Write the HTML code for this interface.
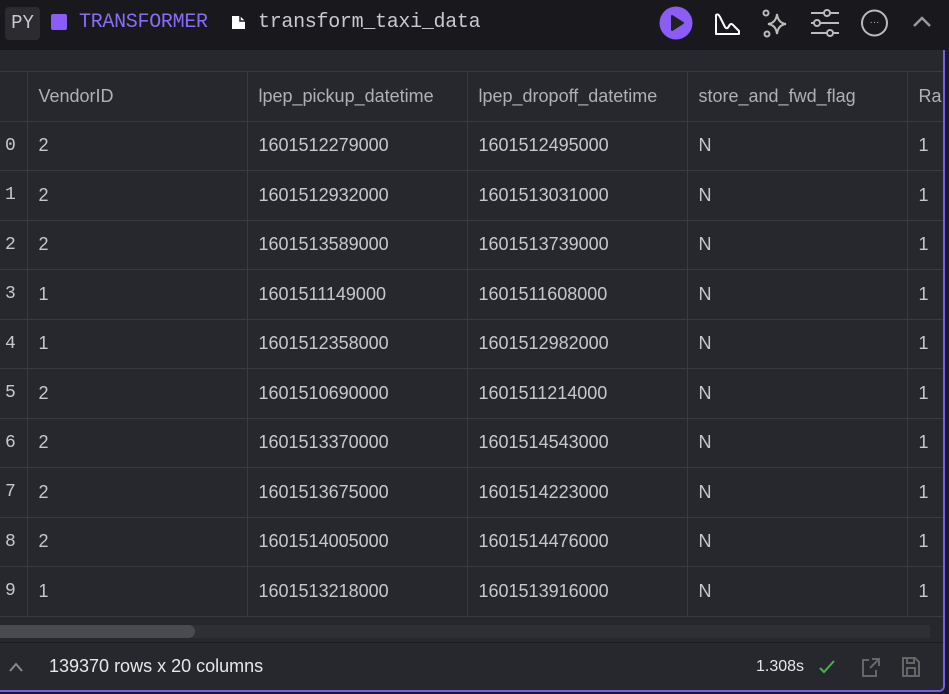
<!DOCTYPE html>
<html><head><style>
body{margin:0;width:949px;height:694px;background:#1b1b1f;overflow:hidden;font-family:"Liberation Sans",sans-serif;position:relative}
.hdr{position:absolute;left:0;top:0;width:949px;height:50px;background:#19191d}
.mono{font-family:"Liberation Mono",monospace}
.wrap{position:absolute;left:0;top:50px;width:943px;height:640px;background:#27282d;border-right:2px solid #7a5cf0;border-bottom:2px solid #7a5cf0;border-bottom-right-radius:6px;overflow:hidden}
table{position:absolute;top:21px;left:0;border-collapse:collapse;table-layout:fixed;width:947px;color:#c8c8cc;font-size:18px;border-bottom:1px solid #3a3b40}
td{height:49.5px;border-top:1px solid #3a3b40;border-left:1px solid #3a3b40;padding:0 0 0 11px;box-sizing:border-box;white-space:nowrap;overflow:hidden}
td.i{padding:0 0 0 5px;border-left:none;font-family:"Liberation Mono",monospace}
tr.h td{color:#b0b0b5}
.sb{position:absolute;left:0;top:575px;width:930px;height:13px;background:#2f3036}
.th{position:absolute;left:0;top:575px;width:195px;height:13px;background:#4a4b50;border-radius:0 7px 7px 0}
.ft{position:absolute;left:0;top:592px;width:943px;height:48px;border-top:1px solid #1b1b1f;background:#27282d}
</style></head><body>
<div class="hdr">
<div style="position:absolute;left:5px;top:7px;width:35px;height:33px;background:#2b2b30;border-radius:4px;color:#c8c8d0;font-size:19px;line-height:33px;text-align:center" class="mono">PY</div>
<div style="position:absolute;left:51px;top:14px;width:16px;height:16px;background:#8b5cf6;border-radius:2px"></div>
<div class="mono" style="position:absolute;left:79px;top:11px;color:#8b6cf6;font-size:20px;letter-spacing:-0.3px">TRANSFORMER</div>
<svg style="position:absolute;left:231px;top:14px" width="15" height="16"><path d="M1 2h8l5 5v8H1z" fill="#fff"/><path d="M9 2v5h5" fill="none" stroke="#19191d" stroke-width="1.5"/></svg>
<div class="mono" style="position:absolute;left:258px;top:11px;color:#c8c8d0;font-size:20px;letter-spacing:-0.3px">transform_taxi_data</div>
<svg style="position:absolute;left:659px;top:6px" width="34" height="34"><circle cx="17" cy="17" r="16.5" fill="#8b5cf6"/><path d="M13 10l11 7-11 7z" fill="#222" stroke="#222" stroke-width="2" stroke-linejoin="round"/></svg>
<svg style="position:absolute;left:713px;top:10px" width="28" height="26" fill="none" stroke="#fff" stroke-width="2" stroke-linejoin="round"><path d="M3 5q2-2 4 2l5 10q2 3 4-1q2-4 5 0l5 5v3H3z"/></svg>
<svg style="position:absolute;left:760px;top:8px" width="30" height="32" fill="none" stroke="#bbb" stroke-width="2"><path d="M17 6q1 9 9 10q-8 1-9 10q-1-9-9-10q8-1 9-10z"/><circle cx="6" cy="5" r="2.5"/><circle cx="7" cy="26" r="2.5"/></svg>
<svg style="position:absolute;left:810px;top:8px" width="30" height="30" fill="none" stroke="#bbb" stroke-width="2"><path d="M1 5h28M1 15h28M1 25h28"/><circle cx="17" cy="5" r="3" fill="#19191d"/><circle cx="7" cy="15" r="3" fill="#19191d"/><circle cx="20" cy="25" r="3" fill="#19191d"/></svg>
<svg style="position:absolute;left:860px;top:8px" width="30" height="30"><circle cx="14.5" cy="15" r="12.5" fill="none" stroke="#bbb" stroke-width="2"/><text x="14.5" y="17" fill="#bbb" font-size="10" text-anchor="middle" font-family="Liberation Sans">···</text></svg>
<svg style="position:absolute;left:912px;top:15px" width="20" height="14" fill="none" stroke="#999" stroke-width="2.5"><path d="M2 11l8-8 8 8"/></svg>
</div>
<div class="wrap">
<table>
<colgroup><col style="width:27px"><col style="width:220px"><col style="width:220px"><col style="width:220px"><col style="width:220px"><col style="width:40px"></colgroup>
<tr class="h"><td class="i"></td><td>VendorID</td><td>lpep_pickup_datetime</td><td>lpep_dropoff_datetime</td><td>store_and_fwd_flag</td><td>Ra</td></tr>
<tr><td class="i">0</td><td>2</td><td>1601512279000</td><td>1601512495000</td><td>N</td><td>1</td></tr>
<tr><td class="i">1</td><td>2</td><td>1601512932000</td><td>1601513031000</td><td>N</td><td>1</td></tr>
<tr><td class="i">2</td><td>2</td><td>1601513589000</td><td>1601513739000</td><td>N</td><td>1</td></tr>
<tr><td class="i">3</td><td>1</td><td>1601511149000</td><td>1601511608000</td><td>N</td><td>1</td></tr>
<tr><td class="i">4</td><td>1</td><td>1601512358000</td><td>1601512982000</td><td>N</td><td>1</td></tr>
<tr><td class="i">5</td><td>2</td><td>1601510690000</td><td>1601511214000</td><td>N</td><td>1</td></tr>
<tr><td class="i">6</td><td>2</td><td>1601513370000</td><td>1601514543000</td><td>N</td><td>1</td></tr>
<tr><td class="i">7</td><td>2</td><td>1601513675000</td><td>1601514223000</td><td>N</td><td>1</td></tr>
<tr><td class="i">8</td><td>2</td><td>1601514005000</td><td>1601514476000</td><td>N</td><td>1</td></tr>
<tr><td class="i">9</td><td>1</td><td>1601513218000</td><td>1601513916000</td><td>N</td><td>1</td></tr>
</table>
<div class="sb"></div><div class="th"></div>
<div class="ft">
<svg style="position:absolute;left:8px;top:18px" width="16" height="12" fill="none" stroke="#888" stroke-width="2"><path d="M2 10l6-7 6 7"/></svg>
<div style="position:absolute;left:49px;top:13px;color:#e8e8ea;font-size:18px">139370 rows x 20 columns</div>
<div style="position:absolute;left:756px;top:15px;color:#e8e8ea;font-size:16px">1.308s</div>
<svg style="position:absolute;left:818px;top:16px" width="18" height="16" fill="none" stroke="#3fb93f" stroke-width="2"><path d="M2 9l4 4 10-11"/></svg>
<svg style="position:absolute;left:860px;top:13px" width="22" height="22" fill="none" stroke="#666" stroke-width="2"><path d="M9 4H3v16h13v-6M12 3h7v7M19 3l-9 9"/></svg>
<svg style="position:absolute;left:901px;top:13px" width="20" height="22" fill="none" stroke="#666" stroke-width="2"><path d="M2 2h12l4 4v14H2zM6 2v5h7V2M6 12h8v8H6z"/></svg>
</div>
</div>
</body></html>
